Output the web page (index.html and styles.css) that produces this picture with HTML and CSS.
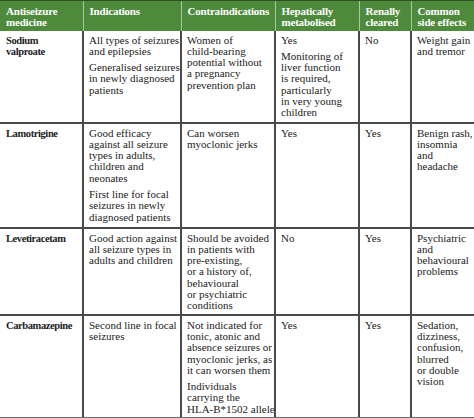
FILE: index.html
```html
<!DOCTYPE html>
<html>
<head>
<meta charset="utf-8">
<link rel="stylesheet" href="styles.css">
</head>
<body>
<table class="drugs">
  <colgroup>
    <col class="c1"><col class="c2"><col class="c3"><col class="c4"><col class="c5"><col class="c6">
  </colgroup>
  <thead>
    <tr class="head">
      <th>Antiseizure<br>medicine</th>
      <th>Indications</th>
      <th>Contraindications</th>
      <th>Hepatically<br>metabolised</th>
      <th>Renally<br>cleared</th>
      <th>Common<br>side effects</th>
    </tr>
  </thead>
  <tbody>
    <tr class="r1">
      <td class="name">Sodium<br>valproate</td>
      <td><p>All types of seizures<br>and epilepsies</p><p>Generalised seizures<br>in newly diagnosed<br>patients</p></td>
      <td><p>Women of<br>child-bearing<br>potential without<br>a pregnancy<br>prevention plan</p></td>
      <td><p>Yes</p><p>Monitoring of<br>liver function<br>is required,<br>particularly<br>in very young<br>children</p></td>
      <td><p>No</p></td>
      <td><p>Weight gain<br>and tremor</p></td>
    </tr>
    <tr class="r2">
      <td class="name">Lamotrigine</td>
      <td><p>Good efficacy<br>against all seizure<br>types in adults,<br>children and<br>neonates</p><p>First line for focal<br>seizures in newly<br>diagnosed patients</p></td>
      <td><p>Can worsen<br>myoclonic jerks</p></td>
      <td><p>Yes</p></td>
      <td><p>Yes</p></td>
      <td><p>Benign rash,<br>insomnia<br>and<br>headache</p></td>
    </tr>
    <tr class="r3">
      <td class="name">Levetiracetam</td>
      <td><p>Good action against<br>all seizure types in<br>adults and children</p></td>
      <td><p>Should be avoided<br>in patients with<br>pre-existing,<br>or a history of,<br>behavioural<br>or psychiatric<br>conditions</p></td>
      <td><p>No</p></td>
      <td><p>Yes</p></td>
      <td><p>Psychiatric<br>and<br>behavioural<br>problems</p></td>
    </tr>
    <tr class="r4">
      <td class="name">Carbamazepine</td>
      <td><p>Second line in focal<br>seizures</p></td>
      <td><p>Not indicated for<br>tonic, atonic and<br>absence seizures or<br>myoclonic jerks, as<br>it can worsen them</p><p>Individuals<br>carrying the<br>HLA-B*1502 allele</p></td>
      <td><p>Yes</p></td>
      <td><p>Yes</p></td>
      <td><p>Sedation,<br>dizziness,<br>confusion,<br>blurred<br>or double<br>vision</p></td>
    </tr>
  </tbody>
</table>
</body>
</html>
```

FILE: styles.css
```css
html, body {
  margin: 0;
  padding: 0;
  background: #ffffff;
}
body {
  width: 474px;
  height: 418px;
  overflow: hidden;
  font-family: "Liberation Serif", "Times New Roman", serif;
  color: #222222;
}
.drugs {
  width: 474px;
  border-collapse: collapse;
  table-layout: fixed;
  font-size: 11px;
  line-height: 11.3px;
}
.c1 { width: 83px; }
.c2 { width: 98px; }
.c3 { width: 94px; }
.c4 { width: 84px; }
.c5 { width: 52px; }
.c6 { width: 63px; }

.head {
  background: #4d8a3c;
  height: 30px;
}
.head th {
  color: #ffffff;
  font-weight: bold;
  font-size: 11px;
  letter-spacing: -0.2px;
  text-align: left;
  vertical-align: top;
  padding: 5px 2px 2px 6px;
  border-left: 1px solid #a9c99d;
  border-top: 1px solid #2f4f26;
  white-space: nowrap;
}
.head th:first-child { border-left: none; }

td {
  vertical-align: top;
  padding: 4px 2px 2px 5px;
  border-left: 2px solid #4a4a4a;
  border-bottom: 2px solid #4a4a4a;
  white-space: nowrap;
  overflow: hidden;
}
td:first-child { border-left: none; padding-left: 6px; }
td.name {
  font-weight: bold;
  font-size: 10.5px;
  letter-spacing: -0.4px;
}
td p { margin: 0 0 5px 0; }
td p:last-child { margin-bottom: 0; }

.r1 { height: 92px; }
.r2 { height: 105px; }
.r3 { height: 87px; }
.r4 { height: 99px; }
.r4 td { border-bottom-color: #6a6a6a; }
```
